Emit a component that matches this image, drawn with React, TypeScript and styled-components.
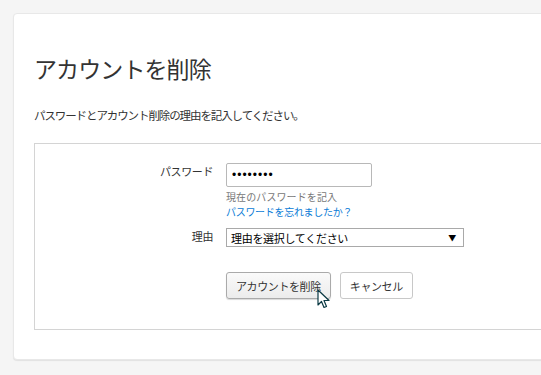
import React from "react";
import styled, {createGlobalStyle} from "styled-components";

const GlobalStyle = createGlobalStyle`
  html, body {
    margin: 0;
    padding: 0;
    background: #f5f5f5;
    overflow: hidden;
  }
  body {
    font-family: "Noto Sans CJK JP", "Noto Sans", sans-serif;
    color: #333;
  }
`;

const Page = styled.div`
  padding: 13px 0 0 13px;
  width: 541px;
  height: 375px;
  box-sizing: border-box;
  overflow: hidden;
`;

const Card = styled.section`
  width: 600px;
  height: 347px;
  box-sizing: border-box;
  background: #fff;
  border: 1px solid #e8e8e8;
  border-radius: 4px;
  box-shadow: 0 1px 1px rgba(0, 0, 0, 0.08);
  padding: 38px 0 0 20px;
`;

const Title = styled.h1`
  margin: 0;
  font-size: 23px;
  font-weight: 400;
  line-height: 32px;
  letter-spacing: -0.9px;
  color: #333;
`;

const Lead = styled.p`
  margin: 23px 0 0;
  font-size: 11.5px;
  line-height: 16px;
  letter-spacing: -1.1px;
  color: #333;
`;

const FormBox = styled.div`
  margin-top: 20px;
  width: 560px;
  height: 187px;
  box-sizing: border-box;
  border: 1px solid #d4d4d4;
  padding: 19px 0 0;
`;

const Row = styled.div<{$top?: number}>`
  display: grid;
  grid-template-columns: 178px auto;
  column-gap: 13px;
  margin-top: ${({$top}) => $top ?? 0}px;
`;

const Label = styled.label`
  text-align: right;
  font-size: 11px;
  line-height: 16px;
  letter-spacing: -0.4px;
  color: #333;
`;

const Field = styled.div`
  display: flex;
  flex-direction: column;
  align-items: flex-start;
`;

const PasswordInput = styled.input`
  width: 146px;
  height: 24px;
  box-sizing: border-box;
  border: 1px solid #b8b8b8;
  border-radius: 2px;
  padding: 0 5px;
  font-size: 12px;
  font-family: "Liberation Sans", sans-serif;
  letter-spacing: 1px;
  color: #000;
  outline: none;
`;

const Hint = styled.span`
  margin-top: 2px;
  font-size: 10px;
  line-height: 15px;
  letter-spacing: 0.1px;
  color: #777;
`;

const ForgotLink = styled.a`
  font-size: 10px;
  line-height: 16px;
  letter-spacing: -0.3px;
  color: #0a7bd6;
  text-decoration: none;
`;

const Select = styled.div`
  width: 238px;
  height: 19px;
  box-sizing: border-box;
  border: 1px solid #a9a9a9;
  padding: 0 7px 0 4px;
  display: flex;
  align-items: center;
  justify-content: space-between;
  font-size: 11px;
  letter-spacing: -0.3px;
  color: #000;
`;

const Arrow = styled.span`
  font-size: 8px;
  color: #000;
`;

const Buttons = styled.div`
  display: flex;
  gap: 9px;
  position: relative;
`;

const Button = styled.button<{$active?: boolean}>`
  height: 27px;
  box-sizing: border-box;
  padding: 0 9px;
  white-space: nowrap;
  border: 1px solid ${({$active}) => ($active ? "#aaa" : "#c8c8c8")};
  border-radius: 3px;
  background: ${({$active}) =>
    $active ? "linear-gradient(#fafafa, #ececec)" : "#fff"};
  box-shadow: ${({$active}) => ($active ? "0 1px 1px rgba(0,0,0,0.15)" : "none")};
  font-family: "Noto Sans CJK JP", sans-serif;
  font-size: 11px;
  letter-spacing: -0.4px;
  color: #333;
`;

const Cursor = styled.svg`
  position: absolute;
  left: 91px;
  top: 17px;
`;

export default function App() {
  return (
    <Page>
      <GlobalStyle />
      <Card>
        <Title>アカウントを削除</Title>
        <Lead>パスワードとアカウント削除の理由を記入してください。</Lead>
        <FormBox>
          <Row>
            <Label>パスワード</Label>
            <Field>
              <PasswordInput type="password" defaultValue="password" />
              <Hint>現在のパスワードを記入</Hint>
              <ForgotLink href="#">パスワードを忘れましたか？</ForgotLink>
            </Field>
          </Row>
          <Row $top={8}>
            <Label>理由</Label>
            <Field>
              <Select>
                <span>理由を選択してください</span>
                <Arrow>▼</Arrow>
              </Select>
            </Field>
          </Row>
          <Row $top={25}>
            <span />
            <Buttons>
              <Button $active>アカウントを削除</Button>
              <Button>キャンセル</Button>
              <Cursor width="13" height="21" viewBox="0 0 13 21">
                <path
                  d="M1 1 L1 16 L4.5 12.5 L7 18.5 L9.5 17.5 L7 11.5 L12 11.5 Z"
                  fill="#fff"
                  stroke="#0b3a44"
                  strokeWidth="1.2"
                  strokeLinejoin="round"
                />
              </Cursor>
            </Buttons>
          </Row>
        </FormBox>
      </Card>
    </Page>
  );
}
